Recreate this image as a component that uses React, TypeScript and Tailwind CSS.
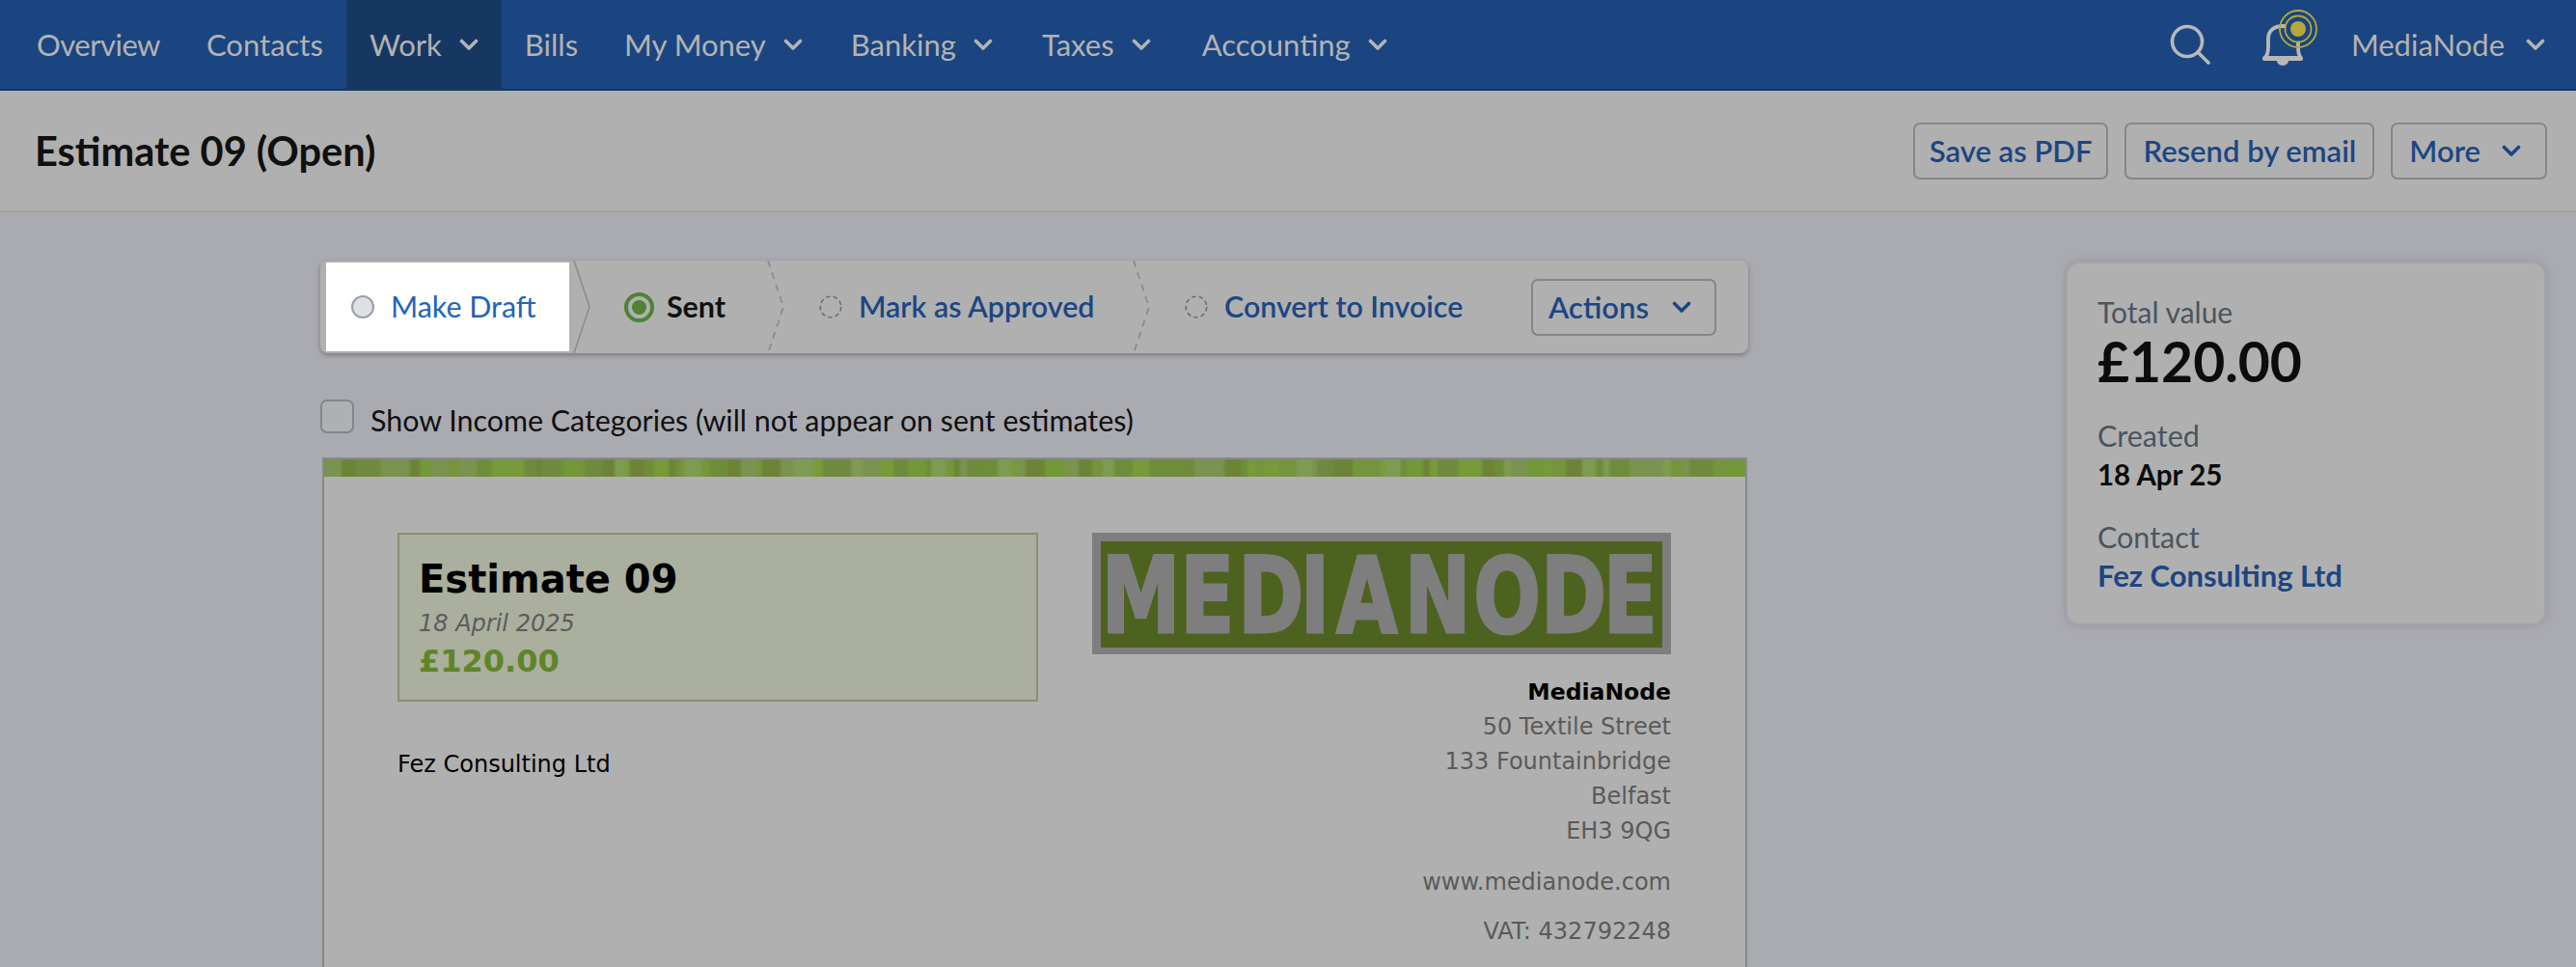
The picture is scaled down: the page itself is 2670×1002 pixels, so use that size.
import React from 'react';

const uiFont = "font-['Lato','Noto_Sans',sans-serif]";

function Chevron({ className = '' }: { className?: string }) {
  return (
    <svg viewBox="0 0 20 13" className={`h-[13px] w-[20px] shrink-0 ${className}`} fill="none" stroke="currentColor" strokeWidth="3.6" strokeLinecap="round" strokeLinejoin="round">
      <polyline points="2.5,2.5 10,10 17.5,2.5" />
    </svg>
  );
}

function NavItem({ label, caret, active, className = '' }: { label: string; caret?: boolean; active?: boolean; className?: string }) {
  return (
    <div className={`flex h-full items-center gap-[18px] px-[24px] ${active ? 'bg-[#173763]' : ''} ${className}`}>
      <span>{label}</span>
      {caret && <Chevron />}
    </div>
  );
}

function OutlineButton({ children, className = '' }: { children: React.ReactNode; className?: string }) {
  return (
    <div className={`flex h-[59px] items-center rounded-[7px] border-2 border-[#83878a] font-semibold text-[#1c4683] ${className}`}>
      {children}
    </div>
  );
}

function StepDivider({ dashed }: { dashed?: boolean }) {
  return (
    <svg viewBox="0 0 18 96" preserveAspectRatio="none" className="h-full w-[18px] shrink-0" fill="none" stroke={dashed ? '#85888a' : '#8d8d8d'} strokeWidth="1.6" strokeDasharray={dashed ? '7 6' : undefined}>
      <polyline points="1,0 17,48 1,96" />
    </svg>
  );
}

function DashedRadio() {
  return (
    <svg viewBox="0 0 24 24" className="h-[24px] w-[24px] shrink-0" fill="none" stroke="#6c6f73" strokeWidth="1.6" strokeDasharray="4.6 3">
      <circle cx="12" cy="12" r="10.8" />
    </svg>
  );
}

// streaky band at the top of the estimate, built from a small seeded generator
const bandColors = ['#6f8c3c', '#789b3a', '#7b9350', '#6c8338', '#739838', '#7f9a52', '#6f8a3e', '#76943e'];
const bandStripes = (() => {
  const out: { w: number; c: string }[] = [];
  let seed = 17;
  for (let i = 0; i < 190; i++) {
    seed = (seed * 137 + 59) % 1009;
    out.push({ w: 5 + (seed % 17), c: bandColors[seed % bandColors.length] });
  }
  return out;
})();

function Band() {
  return (
    <div className="h-[18px] overflow-hidden bg-[#6f8c3c]">
      <div className="flex h-[26px] -translate-y-[4px] blur-[1.4px]">
        {bandStripes.map((s, i) => (
          <div key={i} className="h-full shrink-0" style={{ width: s.w, backgroundColor: s.c }} />
        ))}
      </div>
    </div>
  );
}

function Logo() {
  return (
    <svg viewBox="0 0 600 126" className="h-[126px] w-[600px] shrink-0">
      <rect width="600" height="126" fill="#7e7e7e" />
      <rect x="9" y="9" width="582" height="110" fill="#4e6220" />
      <text
        transform="translate(0 103) scale(0.76 1)"
        x="13 120 199 284 333 426 520 612 697"
        y="0"
        fontFamily="'DejaVu Sans', sans-serif"
        fontWeight="700"
        fontSize="108"
        fill="#7e7e7e"
        stroke="#7e7e7e"
        strokeWidth="3"
      >
        MEDIANODE
      </text>
    </svg>
  );
}

export default function App() {
  const docFont = "font-['DejaVu_Sans',sans-serif]";
  return (
    <div className={`flex h-[1002px] w-[2670px] flex-col overflow-hidden bg-[#aaabb0] text-[#101010] ${uiFont}`}>
      <nav className="flex h-[94px] shrink-0 items-stretch border-b-2 border-[#163763] bg-[#1b4580] text-[31px] text-[#b3b3b3]">
        <div className="flex h-full items-center pl-[14px]">
          <NavItem label="Overview" className="tracking-[-0.5px]" />
          <NavItem label="Contacts" />
          <NavItem label="Work" caret active />
          <NavItem label="Bills" />
          <NavItem label="My Money" caret />
          <NavItem label="Banking" caret className="ml-[2px]" />
          <NavItem label="Taxes" caret className="ml-[3px]" />
          <NavItem label="Accounting" caret className="ml-[5px]" />
        </div>
        <div className="ml-auto flex items-center pr-[32px]">
          <svg viewBox="0 0 42 42" className="h-[42px] w-[42px]" fill="none" stroke="#b8b8b8" strokeWidth="3.6" strokeLinecap="round">
            <circle cx="18" cy="18" r="15.5" />
            <line x1="29" y1="29" x2="40" y2="40" />
          </svg>
          <svg viewBox="0 0 62 68" className="ml-[49px] h-[68px] w-[62px] self-start" fill="none">
            <path d="M7 60c3-2 4-5 4-11v-9c0-8 6-13 15-13s16 5 16 13v9c0 6 1 9 3 11H7z" stroke="#b8b8b8" strokeWidth="3.8" strokeLinejoin="round" />
            <path d="M7 61h38" stroke="#b8b8b8" strokeWidth="4" strokeLinecap="round" />
            <path d="M20 63a6 5 0 0 0 12 0z" fill="#b8b8b8" />
            <circle cx="42" cy="30" r="13" fill="#1b4580" />
            <circle cx="42" cy="30" r="19" stroke="#b5a83a" strokeWidth="1.8" />
            <circle cx="42" cy="30" r="13.5" stroke="#b5a83a" strokeWidth="1.8" />
            <circle cx="42" cy="30" r="8" fill="#b5a83a" />
          </svg>
          <span className="ml-[35px]">MediaNode</span>
          <Chevron className="ml-[22px]" />
        </div>
      </nav>

      <header className="flex h-[126px] shrink-0 items-center justify-between border-b-2 border-[#a3a3a3] bg-[#b0b0b0] pl-[36px] pr-[30px]">
        <h1 className="pt-[1px] text-[41.5px] font-bold">Estimate 09 (Open)</h1>
        <div className="flex gap-[17px] text-[31px]">
          <OutlineButton className="px-[15px]">Save as PDF</OutlineButton>
          <OutlineButton className="px-[17px]">Resend by email</OutlineButton>
          <OutlineButton className="gap-[22px] pl-[17px] pr-[25px]">
            More
            <Chevron />
          </OutlineButton>
        </div>
      </header>

      <main className="flex flex-1 items-start pl-[332px] pt-[50px]">
        <section className="w-[1480px] shrink-0">
          <div className="flex h-[96px] items-stretch rounded-[8px] bg-[#b0b0b0] pl-[6px] text-[30.4px] shadow-[0_2px_5px_rgba(60,60,70,0.45)]">
            <div className="my-[2px] flex w-[252px] items-center gap-[17px] bg-white pl-[26px] text-[#2563b8]">
              <span className="h-[24px] w-[24px] shrink-0 rounded-full border-2 border-[#9aa0a5] bg-[#dde1e5]" />
              Make Draft
            </div>
            <div className="ml-[4px] flex">
              <StepDivider />
            </div>
            <div className="flex w-[183px] items-center gap-[13px] pl-[35px] font-bold">
              <span className="flex h-[31px] w-[31px] shrink-0 items-center justify-center rounded-full border-[4px] border-[#4e8234]">
                <span className="h-[15px] w-[15px] rounded-full bg-[#4e8234]" />
              </span>
              Sent
            </div>
            <StepDivider dashed />
            <div className="flex w-[361px] items-center gap-[17px] pl-[36px] font-semibold text-[#1c4683]">
              <DashedRadio />
              Mark as Approved
            </div>
            <StepDivider dashed />
            <div className="flex w-[395px] items-center gap-[17px] pl-[36px] font-semibold text-[#1c4683]">
              <DashedRadio />
              Convert to Invoice
            </div>
            <div className="flex items-center">
              <OutlineButton className="w-[192px] justify-between pl-[16px] pr-[24px] text-[31px]">
                Actions
                <Chevron />
              </OutlineButton>
            </div>
          </div>

          <label className="mt-[48px] flex h-[35px] items-center gap-[17px] text-[30.4px]">
            <span className="h-[35px] w-[35px] shrink-0 rounded-[7px] border-2 border-[#83878a] bg-[#afb0b2]" />
            <span className="pt-[8px]">Show Income Categories (will not appear on sent estimates)</span>
          </label>

          <article className={`ml-[2px] mt-[25px] h-[600px] w-[1477px] border-x-[2px] border-t-[2px] border-[#858a8d] bg-[#b0b0b0] ${docFont}`}>
            <Band />
            <div className="flex items-start justify-between pl-[76px] pr-[77px] pt-[58px]">
              <div className="w-[664px]">
                <div className="h-[175px] border-2 border-[#8a9075] bg-[#aaaf9e] pl-[20px] pt-[18px]">
                  <div className="text-[40px] font-bold leading-[56px] text-black">Estimate 09</div>
                  <div className="text-[24px] italic leading-[36px] text-[#5c5c5c]">18 April 2025</div>
                  <div className="text-[32px] font-bold leading-[42px] text-[#5f8527]">£120.00</div>
                </div>
                <p className="mt-[49px] text-[24px] leading-[32px] text-black">Fez Consulting Ltd</p>
              </div>
              <div className="flex flex-col items-end text-right text-[24px] leading-[36px] text-[#5a5a5a]">
                <Logo />
                <div className="mt-[21px] text-[23.5px] font-bold text-black">MediaNode</div>
                <div>50 Textile Street</div>
                <div>133 Fountainbridge</div>
                <div>Belfast</div>
                <div>EH3 9QG</div>
                <div className="mt-[17px]">www.medianode.com</div>
                <div className="mt-[15px]">VAT: 432792248</div>
              </div>
            </div>
          </article>
        </section>

        <aside className="ml-[329px] mt-[1px] h-[377px] w-[498px] shrink-0 rounded-[14px] border-2 border-[#a4a5a9] bg-[#b0b0b0] pl-[31px] pt-[31px] shadow-[0_0_10px_rgba(110,112,120,0.35)]">
          <div className="text-[30px] leading-[38px] text-[#4a5560]">Total value</div>
          <div className="pt-[1px] text-[57px] font-bold leading-[62px] text-[#0c0c0c]">£120.00</div>
          <div className="mt-[27px] text-[30.5px] leading-[38px] text-[#4a5560]">Created</div>
          <div className="mt-[3px] text-[29.5px] font-bold leading-[38px] text-[#0c0c0c]">18 Apr 25</div>
          <div className="mt-[26px] text-[30.5px] leading-[38px] text-[#4a5560]">Contact</div>
          <div className="mt-[2px] text-[31px] font-bold leading-[38px] text-[#1c4683]">Fez Consulting Ltd</div>
        </aside>
      </main>
    </div>
  );
}
